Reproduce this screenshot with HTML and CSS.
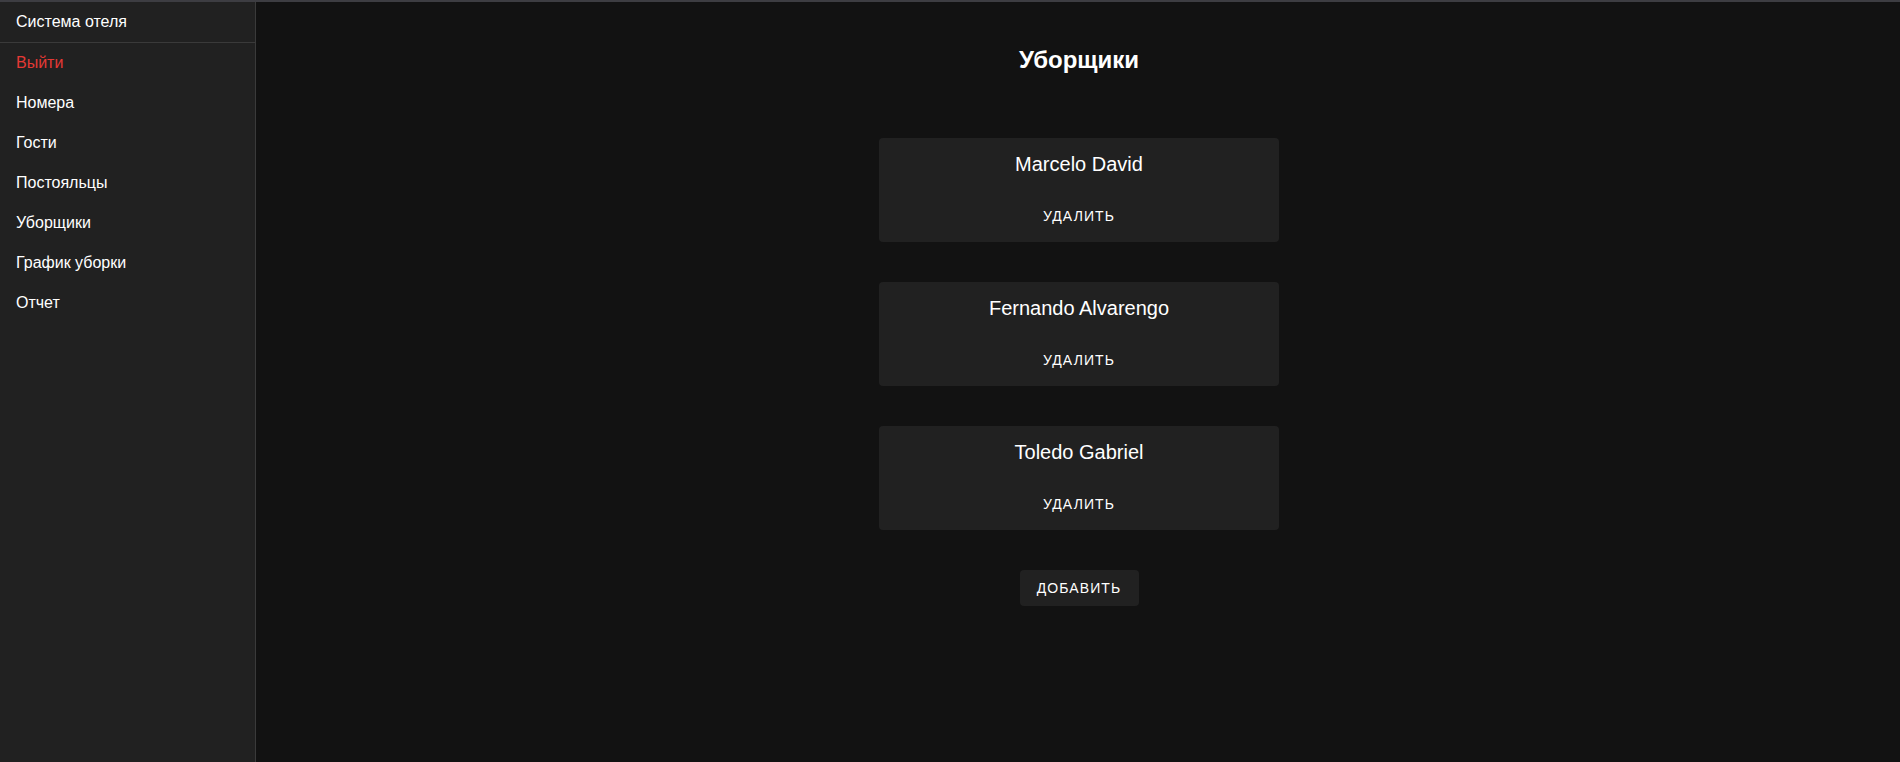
FILE: index.html
```html
<!DOCTYPE html>
<html lang="ru">
<head>
<meta charset="utf-8">
<title>Уборщики</title>
<link rel="stylesheet" href="styles.css">
</head>
<body>
<div class="topline"></div>
<div class="layout">
  <aside class="sidebar">
    <div class="brand">Система отеля</div>
    <nav class="nav">
      <a class="nav-item logout">Выйти</a>
      <a class="nav-item">Номера</a>
      <a class="nav-item">Гости</a>
      <a class="nav-item">Постояльцы</a>
      <a class="nav-item">Уборщики</a>
      <a class="nav-item">График уборки</a>
      <a class="nav-item">Отчет</a>
    </nav>
  </aside>
  <main class="main">
    <h2 class="title">Уборщики</h2>
    <div class="list">
      <div class="card">
        <div class="name">Marcelo David</div>
        <button class="btn-text">Удалить</button>
      </div>
      <div class="card">
        <div class="name">Fernando Alvarengo</div>
        <button class="btn-text">Удалить</button>
      </div>
      <div class="card">
        <div class="name">Toledo Gabriel</div>
        <button class="btn-text">Удалить</button>
      </div>
      <button class="btn-add">Добавить</button>
    </div>
  </main>
</div>
</body>
</html>
```

FILE: styles.css
```css
* { box-sizing: border-box; }
html, body {
  margin: 0;
  height: 100%;
}
body {
  background: #121212;
  color: #fff;
  font-family: "Liberation Sans", Arial, sans-serif;
  display: flex;
  flex-direction: column;
  overflow: hidden;
}
.topline {
  height: 2px;
  background: #3d3d42;
  flex: none;
}
.layout {
  flex: 1;
  display: flex;
  min-height: 0;
}
.sidebar {
  width: 256px;
  flex: none;
  background: #212121;
  border-right: 1px solid #3a3a3a;
}
.brand {
  font-size: 16px;
  line-height: 24px;
  padding: 8px 16px;
  border-bottom: 1px solid #3a3a3a;
}
.nav {
  display: flex;
  flex-direction: column;
}
.nav-item {
  font-size: 16px;
  line-height: 24px;
  padding: 8px 16px;
  color: #fff;
  text-decoration: none;
}
.nav-item.logout { color: #e53935; }
.main {
  flex: 1;
  display: flex;
  flex-direction: column;
  align-items: center;
  padding-left: 2px;
}
.title {
  margin: 44px 0 0;
  font-size: 24px;
  font-weight: 700;
  line-height: 28px;
}
.list {
  margin-top: 64px;
  display: flex;
  flex-direction: column;
  align-items: center;
  gap: 40px;
}
.card {
  width: 400px;
  background: #212121;
  border-radius: 4px;
  padding: 15px 0 8px;
  display: flex;
  flex-direction: column;
  align-items: center;
}
.name {
  font-size: 20px;
  line-height: 23px;
  margin-bottom: 22px;
}
.btn-text, .btn-add {
  font-family: "Liberation Sans", Arial, sans-serif;
  font-size: 14px;
  text-transform: uppercase;
  letter-spacing: 0.08em;
  color: #fff;
  border: none;
  border-radius: 4px;
  height: 36px;
  line-height: 24px;
  cursor: pointer;
}
.btn-text {
  background: transparent;
  padding: 6px 8px;
}
.btn-add {
  background: #212121;
  padding: 6px 12px;
  width: 119px;
}
```
